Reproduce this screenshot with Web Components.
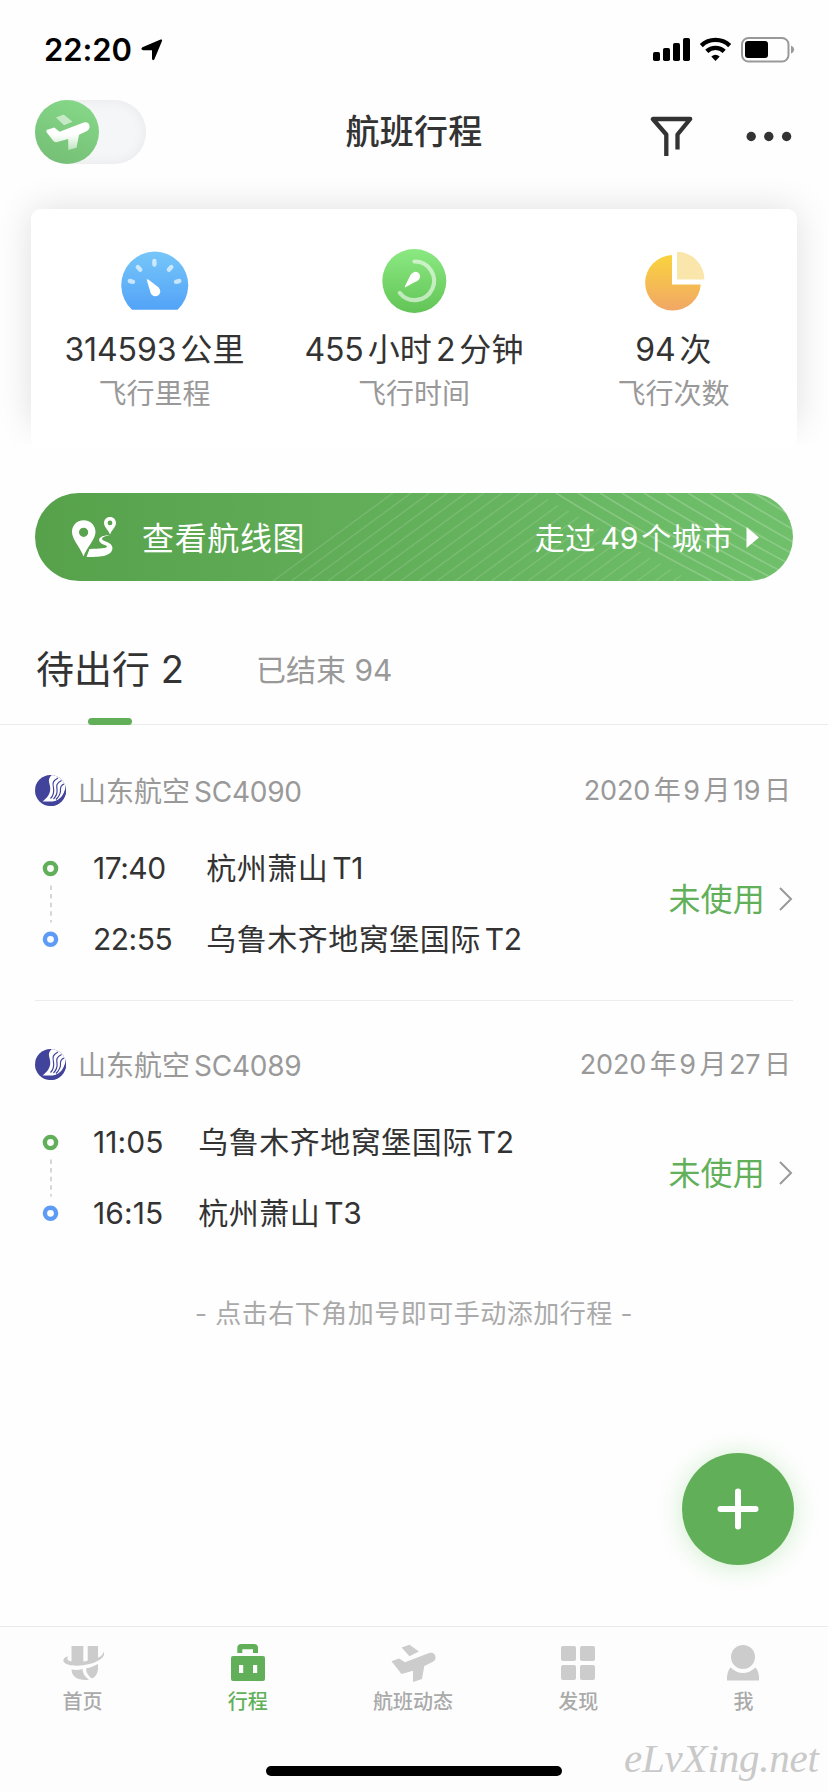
<!DOCTYPE html>
<html lang="zh-CN">
<head>
<meta charset="utf-8">
<title>航班行程</title>
<style>
html,body{margin:0;background:#fefefe}
body{width:828px;height:1792px;overflow:hidden;font-family:Inter,"Noto Sans CJK SC",sans-serif;color:#333}
</style>
</head>
<body>
<trip-app></trip-app>
<script>
// Wraps latin/number runs so they can be spaced away from Chinese characters.
const mix = t => t.replace(/[A-Za-z0-9:]+/g, m => `<span class="n">${m}</span>`);
const base = `*{box-sizing:border-box}svg{display:block;overflow:visible;flex:none}`;
const define = (name, render) => customElements.define(name, class extends HTMLElement {
  constructor(){ super(); this.attachShadow({mode:'open'}); }
  connectedCallback(){
    const t = document.createElement('template');
    t.innerHTML = render(k => this.getAttribute(k) || '');
    this.shadowRoot.replaceChildren(t.content.cloneNode(true));
  }
});

define('status-bar', () => `<style>${base}
:host{display:flex;height:100px;padding:35px 33px 0 44px;color:#000;align-items:flex-start}
.t{font-size:31px;font-weight:600;line-height:29px;letter-spacing:-.1px;width:97px;white-space:nowrap}
.r{margin-left:auto;margin-top:2px}</style>
<span class="t">22:20</span>
<svg width="22" height="22" viewBox="0 0 22 22" style="margin-top:4px"><path d="M1.4 8.3 19.6.6Q21.8-.1 21 2L13.3 20.400Q11.600 22.300 11 19.800V11.200H2.300Q-1 10.500 1.400 8.300Z"/></svg>
<svg class="r" width="142" height="26" viewBox="653 37 142 26">
<rect x="653" y="52" width="7" height="9" rx="1.800"/><rect x="663" y="48" width="7" height="13" rx="1.800"/><rect x="673" y="43" width="7" height="18" rx="1.800"/><rect x="683" y="38" width="7" height="23" rx="1.800"/>
<g fill="none" stroke="#000" stroke-width="4.400"><path d="M701.300 45.600A20.500 20.500 0 0 1 729.700 45.600"/><path d="M706.800 51.400A12.500 12.500 0 0 1 724.200 51.400"/></g>
<path d="M711.300 56.500Q715.500 53 719.700 56.500L715.500 61Z"/>
<rect x="742" y="38" width="46.500" height="23.500" rx="6.500" fill="none" stroke="#999" stroke-width="2"/><rect x="745" y="41" width="23" height="17" rx="3" /><path d="M791 45.500Q794.200 47 794.200 49.500T791 53.800Z" fill="#999"/>
</svg>`);

define('nav-header', () => `<style>${base}
:host{display:grid;grid-template-columns:1fr auto 1fr;height:76px;padding:0 35px;align-items:start}
.sw{width:111px;height:64px;border-radius:32px;background:#f5f6f8;box-shadow:inset 0 0 12px #e6e7e9}
.k{width:64px;height:64px;border-radius:50%;background:linear-gradient(200deg,#87da8a,#73bd74)}
h1{margin:0;font-size:34px;font-weight:500;line-height:64px;letter-spacing:.2px}
.a{justify-self:end;margin-top:16px;margin-right:2px}</style>
<div class="sw"><div class="k"><svg width="64" height="64" viewBox="35 100 64 64"><defs><linearGradient id="plane" x1="0" y1="0" x2="0" y2="1"><stop stop-color="#fff"/><stop offset=".45" stop-color="#fff"/><stop offset="1" stop-color="#fff" stop-opacity=".5"/></linearGradient></defs>
<path d="M56 117.500 63.800 114.600 72.500 121.800 64 125.200Z" fill="#fff" fill-opacity=".55"/>
<path d="M46.500 130 54.300 127.600 59.600 131.800 83.700 122.500Q88.800 121.300 89.500 126Q89.800 129.500 86.500 131.200L79 134.800 76.500 147.800 68.300 150 68.200 139 56.200 142.300Q54.300 142.500 53 140.600L46.400 132Z" fill="url(#plane)"/></svg></div></div>
<h1>航班行程</h1>
<svg class="a" width="141" height="42" viewBox="650 116 141 42"><path d="M666.300 156V134.500L652.800 119H690.200L677.500 134.500V149.500" fill="none" stroke="#333" stroke-width="4.300" stroke-linejoin="round"/><g fill="#333"><circle cx="751.200" cy="136.500" r="4.700"/><circle cx="768.800" cy="136.500" r="4.700"/><circle cx="786.600" cy="136.500" r="4.700"/></g></svg>`);

define('stat-item', g => `<style>${base}
:host{display:flex;flex-direction:column;align-items:center;white-space:nowrap}
.i{height:119px;display:flex;align-items:flex-start}
b{font-weight:400;font-size:32px;line-height:44px;height:44px;letter-spacing:.1px}
.n{margin-right:4px;letter-spacing:-.1px}.n:not(:first-child){margin-left:4px}
small{font-size:28px;line-height:44px;color:#999}</style>
<div class="i"><slot></slot></div><b>${mix(g('value'))}</b><small>${g('label')}</small>`);

define('stats-card', () => `<style>${base}
:host{display:block;height:273px;padding:33px 31px 0;overflow:hidden}
.c{position:relative;height:240px;border-radius:10px;background:#fff}
.s{position:absolute;inset:0 0 22px;border-radius:10px;box-shadow:0 0 36px rgba(0,0,0,.125);clip-path:inset(-50px -50px -17px)}
.g{position:relative;height:100%;background:#fff;border-radius:10px;display:grid;grid-template-columns:repeat(3,259.500px);justify-content:center}</style>
<div class="c"><div class="s"></div><div class="g">
<stat-item value="314593公里" label="飞行里程"><svg width="67" height="102" viewBox="121 209 67 102"><defs><linearGradient id="blue" x1="0" y1="0" x2="0" y2="1"><stop stop-color="#76c6f9"/><stop offset="1" stop-color="#53a3f8"/></linearGradient></defs><path d="M132 309.700A33.500 33.500 0 1 1 177.500 309.700Z" fill="url(#blue)"/><g stroke="#fff" stroke-opacity=".65" stroke-width="4.400" stroke-linecap="round"><path d="M154.400 261V264.500M137.800 267 140.300 269.700M171.300 267 168.800 269.700M129.800 281 133 281.800M179.300 281 176 281.800"/></g><path d="M146.600 279.500Q147.500 278.800 149 280L158.700 287.500Q161.800 291.500 159 294.700Q155.500 297.800 152 295Q150.700 293.700 150.200 291.500Z" fill="#fff"/></svg></stat-item>
<stat-item value="455小时2分钟" label="飞行时间"><svg width="64" height="104" viewBox="382 209 64 104"><defs><linearGradient id="green" x1="0" y1="0" x2="0" y2="1"><stop stop-color="#8be982"/><stop offset="1" stop-color="#62c456"/></linearGradient></defs><circle cx="414.300" cy="281" r="32" fill="url(#green)"/><path d="M414.500 261.500A19.300 19.300 0 1 1 399.800 293" fill="none" stroke="#fff" stroke-opacity=".58" stroke-width="4.200" stroke-linecap="round"/><path d="M405 287.500Q404.500 286.500 405.500 285L410.800 274.500Q414.500 270.500 418 272.500Q421.800 275.500 419 279.500Q417.500 281.300 415 282Z" fill="#fff"/></svg></stat-item>
<stat-item value="94次" label="飞行次数"><svg width="60" height="102" viewBox="643.300 209 60 102"><defs><linearGradient id="gold" x1="0" y1="0" x2="0" y2="1"><stop stop-color="#f9d33e"/><stop offset="1" stop-color="#f1a766"/></linearGradient></defs><path d="M671.300 255A27.800 27.800 0 1 0 700 284.500H671.300Z" fill="url(#gold)"/><path d="M676.300 251.700A27.700 27.700 0 0 1 703.700 279.500H676.300Z" fill="#fae6aa"/></svg></stat-item>
</div></div>`);

define('route-banner', () => {
  let a = '', b = '';
  for (let i = 0; i < 26; i++) a += `M${273 + i * 18.2} 581L${393 + i * 18.2} 493`;
  for (let i = 0; i < 12; i++) b += `M${556 + i * 22} 493Q${630 + i * 22} 539 ${712 + i * 22} 581`;
  return `<style>${base}
:host{display:flex;align-items:center;position:relative;height:88px;margin:44px 35px 0;border-radius:44px;overflow:hidden;background:linear-gradient(90deg,#57a14b,#63b05b 50%,#70c06b);color:#fff;padding:0 34px 0 37px;white-space:nowrap}
.bg{position:absolute;left:0;top:0}
.i{position:relative}.l{position:relative;font-size:32px;letter-spacing:.65px;margin:0 0 2px 25px}
.r{position:relative;margin:0 13px 2px auto;font-size:30px;letter-spacing:.6px}.n{margin:0 3px 0 4.500px;letter-spacing:-.1px}</style>
<svg class="bg" width="758" height="88" viewBox="35 493 758 88" fill="none" stroke="#fff"><clipPath id="left"><path d="M200 493H537L691 581H200Z"/></clipPath><path clip-path="url(#left)" d="${a}" stroke-width="1.500" stroke-opacity=".13"/><path d="${b}" stroke-width="1.700" stroke-opacity=".2"/></svg>
<svg class="i" width="45" height="42" viewBox="72 516 45 42" fill="#fff"><path fill-rule="evenodd" d="M83.700 520.300C76.500 520.300 72 525.500 72 532C72 539.500 80.500 547.500 83.500 556.500C86.500 547.500 95.500 539.500 95.500 532C95.500 525.500 90.700 520.300 83.700 520.300ZM83.600 527.700A4.600 4.600 0 1 1 83.600 536.900A4.600 4.600 0 1 1 83.600 527.700Z"/><path fill-rule="evenodd" d="M110 517C106.500 517 104 519.600 104 523C104 527 108.300 530 110 534.500C111.700 530 116 527 116 523C116 519.600 113.500 517 110 517ZM110 520.500A2.400 2.400 0 1 1 110 525.300A2.400 2.400 0 1 1 110 520.500Z"/><path d="M110 535C101 535.500 98 538 99.500 541.500C101 544.700 107 545 107 546.500C106.500 548.500 100 548.600 89.500 549L86.500 557C98 557 112 557 112.500 548C112.500 542 101.500 541.500 102 538.800C102.300 537 105 536.300 110 535Z"/></svg>
<span class="l">查看航线图</span><span class="r">${mix('走过49个城市')}</span>
<svg style="position:relative" width="13" height="21" viewBox="0 0 13 21"><path d="M.5 0 13 10.500.5 21Z" fill="#fff"/></svg>`;
});

define('trip-tabs', () => `<style>${base}
:host{display:flex;height:144px;border-bottom:1px solid #ebebeb;padding:60px 0 0 36px;line-height:58px;white-space:nowrap}
.a{position:relative;font-size:38px;line-height:56px;letter-spacing:0;width:220px}
.a::after{content:"";position:absolute;left:51.500px;top:77px;width:44px;height:7px;border-radius:4px;background:#62af5a}
.b{font-size:30px;color:#999}</style>
<span class="a">待出行 2</span><span class="b">已结束 94</span>`);

define('flight-card', g => `<style>${base}
:host{display:block;margin:0 35px;height:275px;white-space:nowrap}
:host([divided]){border-bottom:1px solid #ececec;height:276px;margin-bottom:-2px}
.h{display:flex;align-items:center;padding-top:49px;height:83px;line-height:32px;font-size:28px;color:#999}
.h svg{margin-bottom:2px}
.h .air{margin-left:12px;margin-top:2px}.air .n{margin-left:4px;letter-spacing:-.25px}
.date{margin:0 2px 1px auto;font-size:27px}.date .n{letter-spacing:-.1px;margin-right:3.500px}.date .n:not(:first-child){margin-left:2.500px}
.b{display:flex;align-items:flex-start;margin-top:25px}
.m{margin:27px 0 0 7px}
.t,.p{font-size:30px;line-height:71px}
.t{margin-left:34px;letter-spacing:${g('tracking')}px}
.p{margin-left:${g('gap')}px;letter-spacing:.5px}.p .n{margin-left:4px;letter-spacing:-.3px}
.s{margin-left:auto;font-size:32px;line-height:134px;color:#62b05a;letter-spacing:.2px;margin-right:14px}
.c{margin:54px 1px 0 0}</style>
<div class="h"><svg width="31" height="31" viewBox="0 0 31 31"><defs><clipPath id="disc"><circle cx="15.500" cy="15.500" r="15.500"/></clipPath></defs><g clip-path="url(#disc)"><rect width="31" height="31" fill="#42439a"/><path d="M31-2H19C13 3 13.500 5 14.500 9C17 17 13 22 7.500 26.500H18Q30 24 31 8Z" fill="#fff"/><g fill="none" stroke="#42439a" stroke-width="1.200"><path d="M23 3C17.500 6 17.500 8 18.500 13C19.300 18 17 22 15.500 23.500"/><path d="M26.500 5.500C21 8.500 21.500 10.500 22 14C22.500 18 20.500 22 18.500 24"/><path d="M29 9C24.500 11 25.500 13.500 25.500 16C25.300 20 23 22.500 21 24.500"/></g><path d="M31 10C30.500 19 26 25 18 27H7L15 31H31Z" fill="#42439a"/></g></svg><span class="air">${mix(g('airline'))}</span><span class="date">${mix(g('date'))}</span></div>
<div class="b"><svg class="m" width="17" height="88" viewBox="0 0 17 88" fill="none"><circle cx="8.500" cy="8.500" r="5.600" stroke="#62af5a" stroke-width="4.400"/><path d="M9 25.500V62.500" stroke="#ccc" stroke-width="1.600" stroke-dasharray="4.500 4.100"/><circle cx="8.500" cy="79.300" r="5.600" stroke="#5e9bf6" stroke-width="4.400"/></svg>
<div class="t"><div>${g('dep')}</div><div>${g('arr')}</div></div><div class="p"><div>${mix(g('from'))}</div><div>${mix(g('to'))}</div></div><span class="s">未使用</span><svg class="c" width="13" height="24" viewBox="0 0 13 24"><path d="M1 1 12 12 1 23" fill="none" stroke="#999" stroke-width="2"/></svg></div>`);

define('add-button', () => `<style>${base}
:host{position:absolute;left:682px;top:1453px;width:112px;height:112px;border-radius:50%;background:#62af5a;display:grid;place-items:center;box-shadow:0 2px 26px rgba(98,200,90,.3)}</style>
<svg width="42" height="42" viewBox="0 0 42 42"><path d="M3.500 21H38.500M21 3.500V38.500" stroke="#fff" stroke-width="6" stroke-linecap="round"/></svg>`);

define('tab-item', () => `<style>${base}
:host{display:flex;flex-direction:column;align-items:center;color:#aaa;font-size:20px;font-weight:500;line-height:24px;width:165.600px}
:host([active]){color:#62af5a}::slotted(svg){display:block;margin-bottom:9px}</style><slot></slot>`);

define('tab-bar', () => `<style>${base}
:host{box-sizing:border-box;position:relative;display:flex;justify-content:center;height:166px;padding:16px 2px 0 0;border-top:1px solid #eaeaea;background:#fdfdfd}
.h{position:absolute;left:266px;top:139px;width:296px;height:10px;border-radius:5px;background:#000}
.w{position:absolute;left:624px;top:109px;font:italic 41px/44px "Liberation Serif",serif;color:#c9c9c9;letter-spacing:-.2px;white-space:nowrap}
svg{display:block}</style>
<tab-item><svg width="44" height="38" viewBox="59 1643 44 38" fill="#ccc"><path d="M69.500 1646H81.300V1664H69.500Z"/><path d="M85.700 1646H96V1660L85.700 1664Z"/><path d="M66 1656.500C62 1657 60.500 1660 62 1662.300C66 1668 91 1666.500 100 1658Q103.500 1654.500 101.300 1651.500Q101.500 1654.500 98 1656.700C88 1662 71 1663 66.500 1660.500Q64.500 1658.500 66 1656.500Z"/><path d="M69.500 1669.500Q75 1670.500 80.500 1669Q80.500 1675 87 1679.800Q70 1681 69.500 1669.500Z"/><path d="M84 1668.500Q91 1667 96 1664V1669Q95.500 1676 90 1678.500Q84.500 1675 84 1668.500Z"/></svg>首页</tab-item>
<tab-item active><svg width="36" height="38" viewBox="230 1643 36 38" fill="#62af5a"><path d="M237.300 1653V1648Q237.300 1644 241.500 1644H254Q258 1644 258 1648V1653H253V1649.300H242.300V1653Z"/><path fill-rule="evenodd" d="M233 1656H263Q265 1656 265 1658V1679Q265 1681 263 1681H233Q231 1681 231 1679V1658Q231 1656 233 1656ZM239 1665V1673H243.200V1665ZM253 1665V1673H257.200V1665Z"/></svg>行程</tab-item>
<tab-item><svg width="44" height="38" viewBox="390.500 1643 44 38" fill="#ccc"><path d="M401 1647.500 409 1644.800 418.300 1651.500 409 1656.300Z"/><path d="M391 1661.300 398.500 1658.500 404.500 1662.300 428.500 1653Q434 1651.500 435 1656.500Q435.500 1660.500 431.500 1662.300L423.800 1666 421.500 1679 412.500 1682V1670.800L401 1674Z"/></svg>航班动态</tab-item>
<tab-item><svg width="34" height="38" viewBox="561 1643 34 38" fill="#ccc"><rect x="561" y="1646" width="15" height="15" rx="2"/><rect x="580" y="1646" width="15" height="15" rx="2"/><rect x="561" y="1665" width="15" height="15" rx="2"/><rect x="580" y="1665" width="15" height="15" rx="2"/></svg>发现</tab-item>
<tab-item><svg width="34" height="38" viewBox="727 1643 34 38" fill="#ccc"><circle cx="744" cy="1657" r="12"/><path d="M728 1680.500Q727.500 1672 731.500 1667.500Q744 1678.500 756.500 1667.500Q760.500 1672 760 1680.500Z"/></svg>我</tab-item>
<div class="h"></div><div class="w">eLvXing.net</div>`);

define('trip-app', () => `<style>${base}
:host{display:flex;flex-direction:column;position:relative;width:828px;height:1792px}
p{margin:25px 0 0;text-align:center;font-size:26px;line-height:30px;letter-spacing:.5px;color:#aaa}
tab-bar{margin-top:auto}</style>
<status-bar></status-bar><nav-header></nav-header><stats-card></stats-card><route-banner></route-banner><trip-tabs></trip-tabs>
<flight-card divided airline="山东航空SC4090" date="2020年9月19日" dep="17:40" arr="22:55" from="杭州萧山T1" to="乌鲁木齐地窝堡国际T2" gap="34" tracking="-.5"></flight-card>
<flight-card airline="山东航空SC4089" date="2020年9月27日" dep="11:05" arr="16:15" from="乌鲁木齐地窝堡国际T2" to="杭州萧山T3" gap="34.5" tracking=".1"></flight-card>
<p>- 点击右下角加号即可手动添加行程 -</p>
<add-button></add-button><tab-bar></tab-bar>`);
</script>
</body>
</html>
